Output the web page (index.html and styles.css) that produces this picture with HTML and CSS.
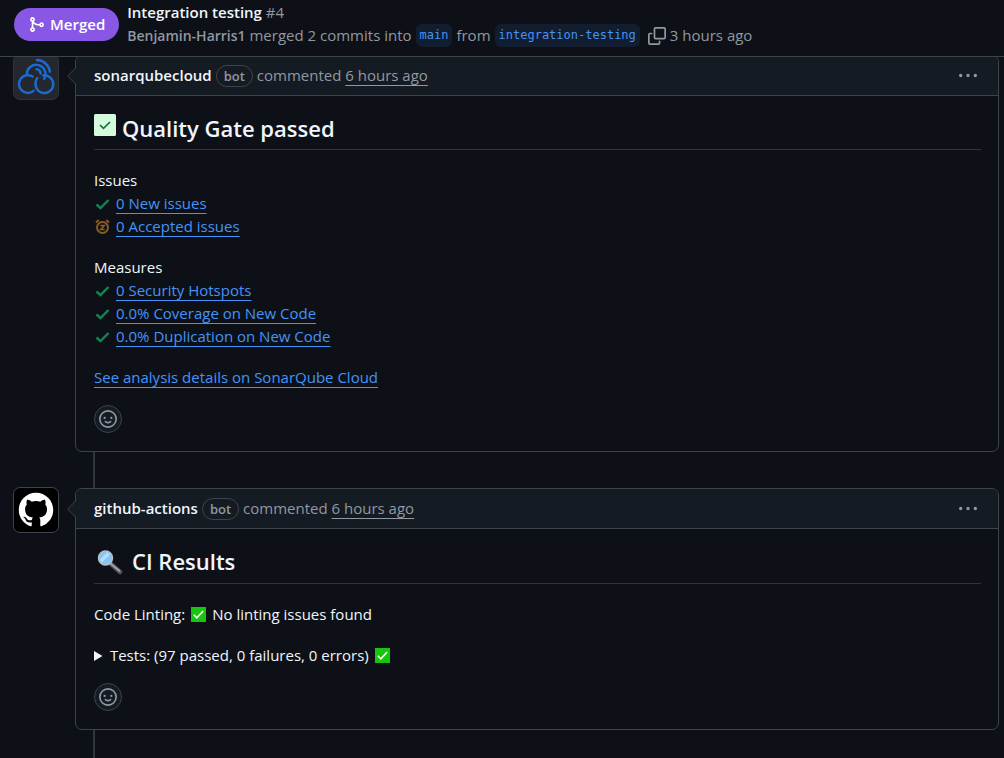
FILE: index.html
```html
<!DOCTYPE html>
<html lang="en">
<head>
<meta charset="utf-8">
<meta name="viewport" content="width=device-width, initial-scale=1">
<title>Integration testing #4</title>
<link rel="stylesheet" href="styles.css">
</head>
<body>
<svg class="sprite" aria-hidden="true">
  <symbol id="check" viewBox="0 0 16 16"><path d="M2.500 8.500 6.500 12.200 14.500 4" fill="none" stroke="#12864f" stroke-width="2.400"/></symbol>
  <symbol id="green-box" viewBox="0 0 16 16"><path fill="#16c60c" d="M0 0h16v16H0z"/><path d="m3 8.300 3.200 3.200L13 4.300" fill="none" stroke="#fff" stroke-width="1.700"/></symbol>
  <symbol id="caret" viewBox="0 0 9 16"><path d="M9 0 1 8l8 8z" fill="#151b23"/><path d="M8.500 0 .7 8l7.800 8" fill="none" stroke="#3d444d"/></symbol>
  <symbol id="dots" viewBox="0 0 16 16"><path d="M8 9a1.500 1.500 0 1 0 0-3 1.500 1.500 0 0 0 0 3ZM1.500 9a1.500 1.500 0 1 0 0-3 1.500 1.500 0 0 0 0 3Zm13 0a1.500 1.500 0 1 0 0-3 1.500 1.500 0 0 0 0 3Z"/></symbol>
  <symbol id="smiley" viewBox="0 0 16 16"><path d="M8 0a8 8 0 1 1 0 16A8 8 0 0 1 8 0ZM1.500 8a6.500 6.500 0 1 0 13 0 6.500 6.500 0 0 0-13 0Zm3.820 1.636a.75.75 0 0 1 1.038.175l.007.009c.103.118.22.222.35.31.264.178.683.37 1.285.37.602 0 1.020-.192 1.285-.371.130-.088.247-.192.350-.310l.007-.008a.75.75 0 0 1 1.222.870l-.614-.431c.614.430.614.431.613.431v.001l-.001.002-.002.003-.005.007-.014.019a2.066 2.066 0 0 1-.184.213c-.160.166-.338.316-.530.445-.630.418-1.370.638-2.127.629-.946 0-1.652-.308-2.126-.630a3.331 3.331 0 0 1-.715-.657l-.014-.020-.005-.006-.002-.003v-.002h-.001l.613-.432-.614.430a.75.75 0 0 1 .183-1.044ZM12 7a1 1 0 1 1-2 0 1 1 0 0 1 2 0ZM5 8a1 1 0 1 1 0-2 1 1 0 0 1 0 2Z"/></symbol>
</svg>

<header class="topbar">
  <span class="state">
    <svg class="state-icon" viewBox="0 0 16 16" aria-hidden="true"><path d="M5.450 5.154A4.250 4.250 0 0 0 9.250 7.500h1.378a2.251 2.251 0 1 1 0 1.500H9.250A5.734 5.734 0 0 1 5 7.123v3.505a2.250 2.250 0 1 1-1.500 0V5.372a2.250 2.250 0 1 1 1.950-.218ZM4.250 13.500a.75.75 0 1 0 0-1.500.75.75 0 0 0 0 1.500Zm8.500-4.500a.75.75 0 1 0 0-1.500.75.75 0 0 0 0 1.500ZM4.250 4a.75.75 0 1 0 0-1.500.75.75 0 0 0 0 1.500Z"/></svg>
    Merged
  </span>
  <div class="summary-text">
    <h1 class="title">Integration testing <span class="number">#4</span></h1>
    <div class="merge-line">
      <span><a class="author" href="#">Benjamin-Harris1</a> merged 2 commits into</span>
      <a class="branch" href="#">main</a>
      <span>from</span>
      <a class="branch" href="#">integration-testing</a>
      <button class="copy" type="button" aria-label="Copy branch name"><svg viewBox="0 0 16 16" aria-hidden="true"><path d="M0 6.750C0 5.784.784 5 1.750 5h1.500a.75.75 0 0 1 0 1.500h-1.500a.25.25 0 0 0-.250.250v7.500c0 .138.112.250.250.250h7.500a.25.25 0 0 0 .250-.250v-1.500a.75.75 0 0 1 1.500 0v1.500A1.750 1.750 0 0 1 9.250 16h-7.500A1.750 1.750 0 0 1 0 14.250Z"/><path d="M5 1.750C5 .784 5.784 0 6.750 0h7.500C15.216 0 16 .784 16 1.750v7.500A1.750 1.750 0 0 1 14.250 11h-7.500A1.750 1.750 0 0 1 5 9.250Zm1.750-.250a.25.25 0 0 0-.250.250v7.500c0 .138.112.250.250.250h7.500a.25.25 0 0 0 .250-.250v-7.500a.25.25 0 0 0-.250-.250Z"/></svg></button>
      <span>3 hours ago</span>
    </div>
  </div>
</header>

<main class="timeline">
  <article class="entry">
    <a class="avatar avatar-sonar" href="#" aria-label="sonarqubecloud">
      <svg viewBox="0 0 46 46" aria-hidden="true"><g fill="none" stroke="#1b6ad0" stroke-width="2.600" stroke-linecap="round"><path d="M19.500 22.500A9.300 9.300 0 1 0 20.500 37.500"/><path d="M30.500 21.300A9.300 9.300 0 1 1 22.500 29.500C22.500 27 23.300 25.300 24.300 24"/><path d="M13.500 20.500A9.700 9.700 0 1 1 31.500 25"/><path d="M23.500 14.800a4.800 4.800 0 0 1 4.300 4.500"/><path d="M24 5.200a14 14 0 0 1 13.500 12.300"/></g></svg>
    </a>
    <section class="card">
      <svg class="caret" aria-hidden="true"><use href="#caret"/></svg>
      <header class="card-head">
        <a class="user" href="#">sonarqubecloud</a><span class="bot">bot</span><span>commented <a class="time" href="#">6 hours ago</a></span>
        <button class="menu" type="button" aria-label="Show options"><svg aria-hidden="true"><use href="#dots"/></svg></button>
      </header>
      <div class="card-body">
        <h2 class="heading">
          <svg class="gate" viewBox="0 0 22 22" aria-hidden="true"><rect width="22" height="22" rx="1.500" fill="#d3fbdc"/><path d="m6 11 3.500 3.300L16 8" fill="none" stroke="#15703f" stroke-width="1.700"/></svg>
          Quality Gate passed
        </h2>
        <div class="group">
          <p>Issues</p>
          <ul class="results">
            <li><svg aria-hidden="true"><use href="#check"/></svg><a href="#">0 New issues</a></li>
            <li><svg viewBox="0 0 16 16" aria-hidden="true"><g fill="none" stroke="#8a5c22"><circle cx="8.500" cy="8.500" r="5.500" stroke-width="2"/><path d="M2 3.500 4.800 1M15 3.500 12.200 1" stroke-width="1.900"/><path d="M6.300 6.500h4L6.700 10.500h4" stroke-width="1.600"/></g></svg><a href="#">0 Accepted issues</a></li>
          </ul>
        </div>
        <div class="group">
          <p>Measures</p>
          <ul class="results">
            <li><svg aria-hidden="true"><use href="#check"/></svg><a href="#">0 Security Hotspots</a></li>
            <li><svg aria-hidden="true"><use href="#check"/></svg><a href="#">0.0% Coverage on New Code</a></li>
            <li><svg aria-hidden="true"><use href="#check"/></svg><a href="#">0.0% Duplication on New Code</a></li>
          </ul>
        </div>
        <p class="group"><a href="#">See analysis details on SonarQube Cloud</a></p>
        <button class="react" type="button" aria-label="Add reaction"><svg aria-hidden="true"><use href="#smiley"/></svg></button>
      </div>
    </section>
  </article>
  <div class="connector"></div>
  <article class="entry">
    <a class="avatar avatar-github" href="#" aria-label="github-actions">
      <svg viewBox="0 0 46 46" aria-hidden="true"><path transform="translate(5 5) scale(2.250)" fill="#fff" d="M8 0c4.420 0 8 3.580 8 8a8.013 8.013 0 0 1-5.450 7.590c-.400.080-.550-.170-.550-.380 0-.270.010-1.130.010-2.200 0-.750-.250-1.230-.540-1.480 1.780-.200 3.650-.880 3.650-3.950 0-.880-.310-1.590-.820-2.150.080-.200.360-1.020-.080-2.120 0 0-.670-.220-2.200.820-.640-.180-1.320-.270-2-.270-.680 0-1.360.090-2 .270-1.530-1.030-2.200-.820-2.200-.820-.440 1.100-.160 1.920-.080 2.120-.510.560-.820 1.280-.820 2.150 0 3.060 1.860 3.750 3.640 3.950-.230.200-.440.550-.510 1.070-.460.210-1.610.550-2.330-.660-.150-.240-.600-.830-1.230-.820-.670.010-.270.380.010.530.340.190.730.900.820 1.130.160.450.680 1.310 2.690.940 0 .670.010 1.300.010 1.490 0 .210-.150.450-.550.380A7.995 7.995 0 0 1 0 8c0-4.420 3.580-8 8-8Z"/></svg>
    </a>
    <section class="card">
      <svg class="caret" aria-hidden="true"><use href="#caret"/></svg>
      <header class="card-head">
        <a class="user" href="#">github-actions</a><span class="bot">bot</span><span>commented <a class="time" href="#">6 hours ago</a></span>
        <button class="menu" type="button" aria-label="Show options"><svg aria-hidden="true"><use href="#dots"/></svg></button>
      </header>
      <div class="card-body">
        <h2 class="heading heading-ci">
          <svg class="lens" viewBox="0 0 30 26" aria-hidden="true"><path d="m17 15 9 8" stroke="#4f5357" stroke-width="4.500" stroke-linecap="round"/><path d="m16.500 14.500 9 7.500" stroke="#a3a6a9" stroke-width="1.800" stroke-linecap="round"/><circle cx="11.500" cy="9" r="7" fill="#83c5f7" stroke="#b8bfc6" stroke-width="1.500"/><path d="M6 10.500 13 3.300a6 6 0 0 1 3 2.200L8 13.500a6 6 0 0 1-2-3Z" fill="#b5ddfb"/></svg>
          CI Results
        </h2>
        <p class="group status">Code Linting: <svg role="img" aria-label="passed"><use href="#green-box"/></svg> No linting issues found</p>
        <details class="group">
          <summary><span class="status">Tests: (97 passed, 0 failures, 0 errors) <svg role="img" aria-label="passed"><use href="#green-box"/></svg></span></summary>
        </details>
        <button class="react" type="button" aria-label="Add reaction"><svg aria-hidden="true"><use href="#smiley"/></svg></button>
      </div>
    </section>
  </article>
  <div class="connector connector-end"></div>
</main>
</body>
</html>
```
FILE: styles.css
```css
* { box-sizing: border-box; }

body {
  margin: 0;
  min-height: 100vh;
  display: flex;
  flex-direction: column;
  background: #0d1117;
  color: #f0f6fc;
  font: 15px/23px "Open Sans", "Noto Sans", sans-serif;
}

h1, h2, p, ul { margin: 0; padding: 0; }
ul { list-style: none; }
svg { fill: currentColor; flex: none; }
button { padding: 0; border: 0; background: none; color: #9198a1; cursor: pointer; }
a { color: #4493f8; text-decoration: underline 1px; text-underline-offset: 4px; text-decoration-skip-ink: none; }

.sprite { display: none; }

.topbar {
  position: sticky;
  top: 0;
  z-index: 2;
  display: flex;
  align-items: flex-start;
  gap: 8px;
  min-height: 57px;
  padding: 1px 14px 0;
  background: #0d1117;
  border-bottom: 1px solid #3d444d;
}

.state {
  display: inline-flex;
  align-items: center;
  gap: 5px;
  height: 33px;
  margin-top: 7px;
  padding: 0 14px;
  border-radius: 17px;
  background: #8957e5;
  color: #fff;
  font-weight: 600;
}
.state-icon { width: 17px; height: 17px; }

.title { font-size: 15px; font-weight: 600; }
.number { color: #9198a1; font-weight: 400; }
.merge-line {
  display: flex;
  flex-wrap: wrap;
  align-items: center;
  gap: 4px;
  color: #9198a1;
}
.author { color: inherit; font-size: 14px; font-weight: 600; text-decoration: none; }
.branch {
  padding: 0 4px;
  border-radius: 6px;
  background: #121d2f;
  font: 12px/23px "DejaVu Sans Mono", monospace;
  text-decoration: none;
}
.copy { display: flex; margin-left: 4px; }
.copy svg { width: 18px; height: 18px; }

.timeline {
  flex: 1;
  display: flex;
  flex-direction: column;
  margin-top: -2px;
  padding: 0 5px 0 13px;
}
.entry { display: flex; align-items: flex-start; gap: 16px; }

.avatar {
  flex: none;
  width: 46px;
  height: 46px;
  margin-top: -1px;
  border: 1px solid #3d444d;
  border-radius: 7px;
  overflow: hidden;
}
.avatar svg { display: block; width: 100%; height: 100%; }
.avatar-sonar { background: #24272e; border-color: #2f353d; }
.avatar-github { background: #000; }

.card {
  position: relative;
  flex: 1;
  min-width: 0;
  border: 1px solid #3d444d;
  border-radius: 7px;
}
.caret { position: absolute; top: 12px; left: -9px; width: 9px; height: 16px; }
.card-head {
  display: flex;
  align-items: center;
  gap: 4px;
  min-height: 40px;
  padding: 0 17px 0 18px;
  border-bottom: 1px solid #3d444d;
  border-radius: 6px 6px 0 0;
  background: #151b23;
  color: #9198a1;
}
.user { color: #f0f6fc; font-weight: 600; text-decoration: none; }
.time { color: inherit; }
.bot {
  padding: 0 7px;
  border: 1px solid #3d444d;
  border-radius: 11px;
  font-size: 13px;
  font-weight: 600;
  line-height: 20px;
}
.menu { display: flex; margin-left: auto; padding: 0 4px; }
.menu svg { width: 18px; height: 18px; }

.card-body { padding: 18px 17px 18px 18px; }
.heading {
  display: flex;
  align-items: center;
  gap: 6px;
  margin-bottom: 19px;
  padding-bottom: 6px;
  border-bottom: 1px solid #2f353d;
  font-size: 22px;
  font-weight: 600;
  line-height: 29px;
}
.heading-ci { gap: 8px; padding-bottom: 7px; }
.gate { width: 22px; height: 22px; margin-bottom: 7px; }
.lens { width: 30px; height: 26px; }

.group { margin-top: 18px; }
.heading + .group { margin-top: 0; }
.results li { display: flex; align-items: center; gap: 6px; }
.results svg { width: 16px; height: 16px; }

.status { display: flex; align-items: center; gap: 6px; }
.status svg { width: 15px; height: 15px; }
summary { cursor: pointer; }
summary .status { display: inline-flex; }

.react {
  display: grid;
  place-items: center;
  width: 28px;
  height: 28px;
  margin-top: 16px;
  border: 1px solid #3d444d;
  border-radius: 50%;
  background: #151b23;
}
.react svg { width: 18px; height: 18px; }

.connector { height: 36px; margin-left: 80px; border-left: 2px solid #2f353d; }
.connector-end { flex: 1; height: auto; min-height: 28px; }
```
